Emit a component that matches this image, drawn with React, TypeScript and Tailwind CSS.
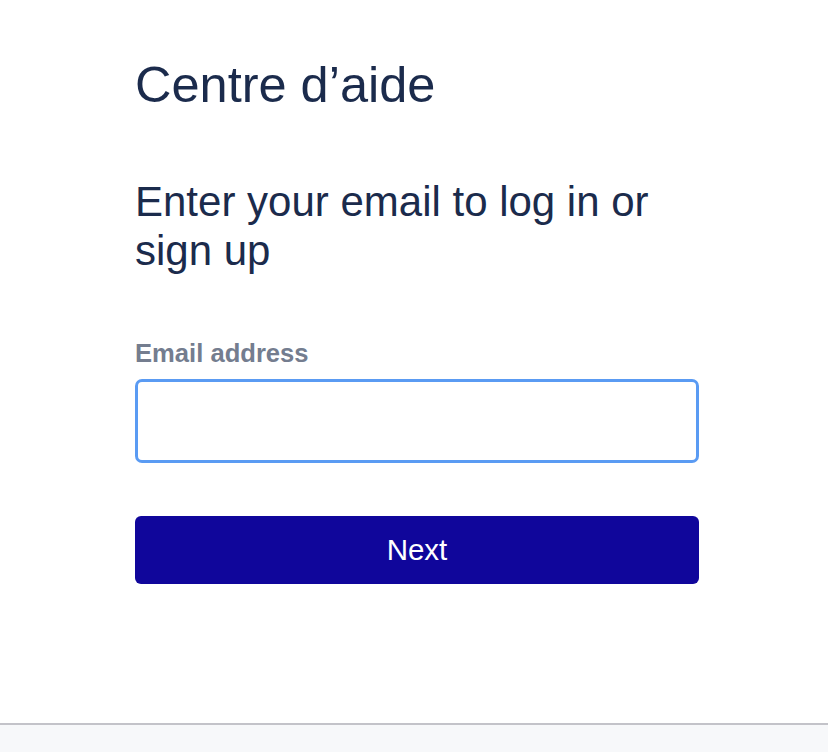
import React from "react";

export default function App() {
  return (
    <div className="flex h-[752px] w-full flex-col bg-white" style={{ fontFamily: '"Liberation Sans", Arial, sans-serif' }}>
      <div className="flex h-[723px] flex-col px-[135px] pt-[55px]">
        <h1 className="text-[50.5px] leading-[60px] font-normal text-[#1b2b4c]">Centre d’aide</h1>
        <h2 className="mt-[62px] text-[42px] leading-[49px] font-normal text-[#1b2b4c]">
          Enter your email to log in or
          <br />
          sign up
        </h2>
        <label className="mt-[63px] block text-[25.6px] leading-[30px] font-bold text-[#747d8f]">Email address</label>
        <input
          type="email"
          className="mt-[11px] h-[84px] w-[564px] rounded-[7px] border-[3px] border-[#5a9bf3] bg-white px-4 text-[28px] outline-none"
        />
        <button className="mt-[53px] flex h-[68px] w-[564px] items-center justify-center rounded-[6px] bg-[#10069b] text-[29.5px] text-white">
          Next
        </button>
      </div>
      <div className="h-[2px] bg-[#c3c3c9]" />
      <div className="flex-1 bg-[#f7f8fa]" />
    </div>
  );
}
